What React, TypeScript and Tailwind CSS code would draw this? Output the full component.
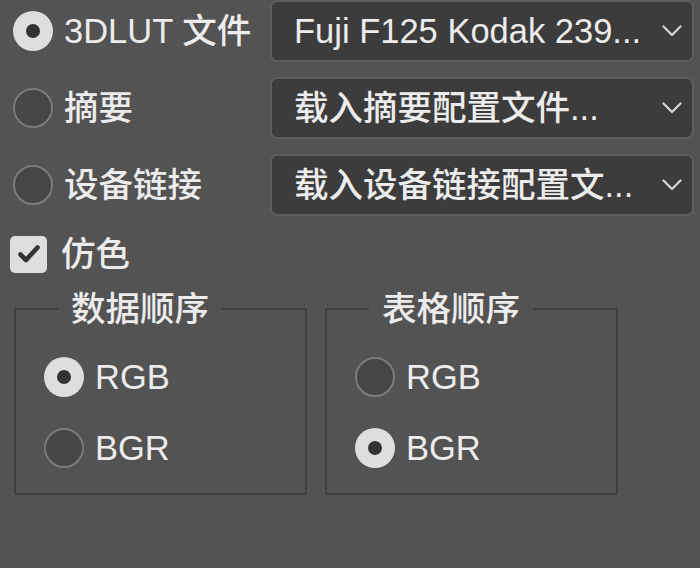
import type { ReactNode } from 'react'

const font = { fontFamily: '"Liberation Sans", "Noto Sans CJK SC", sans-serif' }

function Radio({ checked }: { checked?: boolean }) {
  if (checked) {
    return (
      <span className="flex size-[40px] shrink-0 items-center justify-center rounded-full bg-[#dedede]">
        <span className="size-[14px] rounded-full bg-[#333333]" />
      </span>
    )
  }
  return <span className="size-[40px] shrink-0 rounded-full border-2 border-[#7b7b7b] bg-[#464646]" />
}

function Chevron() {
  return (
    <svg width="20" height="12" viewBox="0 0 20 12" fill="none" className="shrink-0">
      <path d="M1.5 1.5 L10 10 L18.5 1.5" stroke="#d8d8d8" strokeWidth="2.2" strokeLinecap="round" strokeLinejoin="round" />
    </svg>
  )
}

function Select({ value }: { value: string }) {
  return (
    <div className="flex h-[62px] w-[424px] items-center justify-between rounded-[7px] border-2 border-[#5e5e5e] bg-[#3c3c3c] pl-[22px] pr-[10px]">
      <span className="whitespace-nowrap">{value}</span>
      <Chevron />
    </div>
  )
}

function SourceRow({ label, value, checked }: { label: string; value: string; checked?: boolean }) {
  return (
    <div className="flex items-center">
      <div className="flex w-[270px] items-center gap-[11px] pl-[13px]">
        <Radio checked={checked} />
        <span className="whitespace-nowrap">{label}</span>
      </div>
      <Select value={value} />
    </div>
  )
}

function Group({ title, children }: { title: string; children: ReactNode }) {
  return (
    <fieldset className="w-[293px] rounded-[2px] border-2 border-[#3e3e3e]">
      <legend className="ml-[42px] px-[13px] leading-[36px]">{title}</legend>
      <div className="flex flex-col gap-[31px] pb-[25px] pl-[28px] pt-[30px]">{children}</div>
    </fieldset>
  )
}

function Option({ label, checked }: { label: string; checked?: boolean }) {
  return (
    <div className="flex items-center gap-[11px]">
      <Radio checked={checked} />
      <span>{label}</span>
    </div>
  )
}

export default function App() {
  return (
    <div
      className="h-[568px] w-[700px] overflow-hidden bg-[#535353] text-[34.5px] font-medium leading-none text-[#ececec]"
      style={font}
    >
      <div className="flex flex-col gap-[15px]">
        <SourceRow label="3DLUT 文件" value="Fuji F125 Kodak 239..." checked />
        <SourceRow label="摘要" value="载入摘要配置文件..." />
        <SourceRow label="设备链接" value="载入设备链接配置文..." />
      </div>

      <div className="mt-[19px] flex h-[38px] items-center gap-[14px] pl-[10px]">
        <span className="flex size-[37px] items-center justify-center rounded-[5px] bg-[#dedede]">
          <svg width="24" height="20" viewBox="0 0 24 20" fill="none">
            <path d="M3.5 10.5 L9 16 L20.5 3.5" stroke="#333333" strokeWidth="4.6" strokeLinecap="round" strokeLinejoin="round" />
          </svg>
        </span>
        <span>仿色</span>
      </div>

      <div className="mt-[18px] flex gap-[18px] pl-[14px]">
        <Group title="数据顺序">
          <Option label="RGB" checked />
          <Option label="BGR" />
        </Group>
        <Group title="表格顺序">
          <Option label="RGB" />
          <Option label="BGR" checked />
        </Group>
      </div>
    </div>
  )
}
